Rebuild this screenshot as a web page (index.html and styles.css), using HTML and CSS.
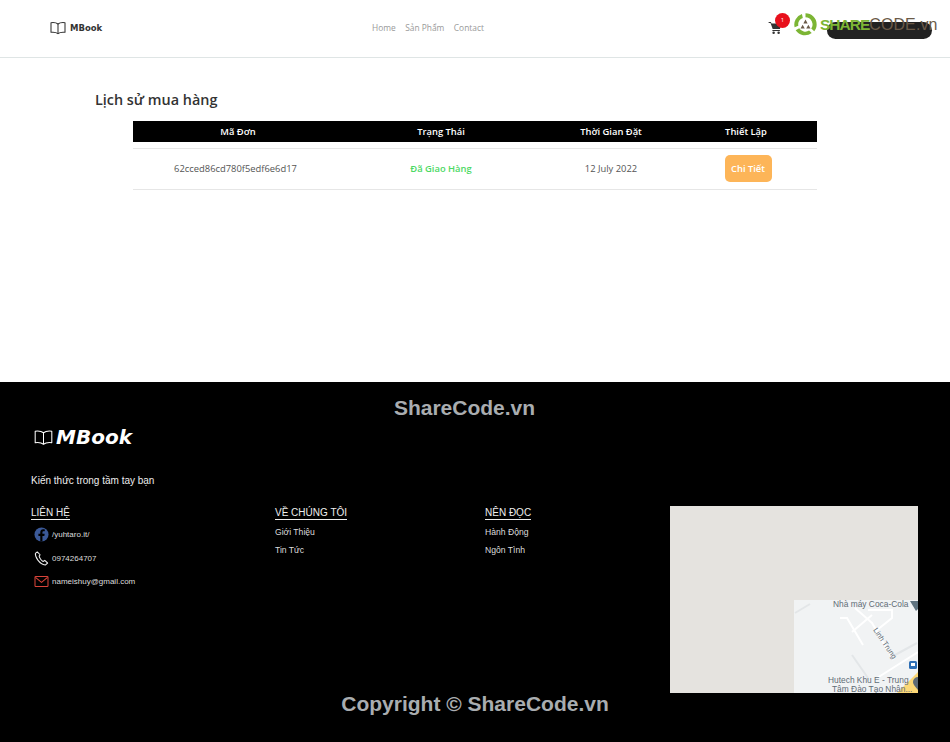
FILE: index.html
```html
<!DOCTYPE html>
<html lang="vi">
<head>
    <meta charset="UTF-8">
    <meta name="viewport" content="width=device-width, initial-scale=1.0">
    <title>MBook</title>
    <link rel="stylesheet" href="styles.css">
</head>
<body>
    <header class="site-header">
        <a class="logo" href="#">
            <svg class="logo-book" viewBox="0 0 24 20" fill="none" stroke="currentColor" stroke-width="1.6" stroke-linejoin="round">
                <path d="M12 4C9.5 2 5.5 1.5 1.5 2v14.500c4-.5 8 0 10.500 2 2.500-2 6.500-2.500 10.500-2V2C18.500 1.500 14.500 2 12 4z"/>
                <path d="M12 4v14.500"/>
            </svg>
            <span>MBook</span>
        </a>
        <nav class="main-nav">
            <a href="#">Home</a>
            <a href="#">Sản Phẩm</a>
            <a href="#">Contact</a>
        </nav>
        <div class="header-right">
            <a class="cart" href="#">
                <svg viewBox="0 0 24 24" width="15" height="15" fill="#333">
                    <path d="M1 3h3.600l1 2.500H22l-3 9H7.500L4 4.800H1z"/>
                    <path d="M7 16h12v1.600H7z"/>
                    <circle cx="9" cy="20.500" r="2"/>
                    <circle cx="17" cy="20.500" r="2"/>
                </svg>
                <span class="cart-badge">1</span>
            </a>
            <div class="user-pill"></div>
        </div>
        <div class="brand-mark">
            <svg viewBox="0 0 28 28" width="25" height="25">
                <path d="M14 1.500A12.500 12.500 0 0 1 26.500 14c0 3-1 5.500-2.700 7.600l-3.400-3A8 8 0 0 0 14 6z" fill="#7cb534"/>
                <path d="M21 23.500A12.500 12.500 0 0 1 3 20.500l4-2.400a8 8 0 0 0 11 2.700z" fill="#7cb534"/>
                <path d="M1.800 17A12.500 12.500 0 0 1 10 2.200l1 4.400A8 8 0 0 0 6 15.500z" fill="#7cb534"/>
                <path d="M14 8.500l2.400 4.300h-4.800zM10.800 14.200l2.400 4.200H8.400zM17.200 14.200l2.400 4.200h-4.800z" fill="#6b5a48"/>
            </svg>
            <div class="brand-name">
                <span class="brand-share">SHARE</span><span class="brand-code">CODE.vn</span>
            </div>
        </div>
    </header>

    <main class="orders">
        <h1>Lịch sử mua hàng</h1>
        <div class="order-table">
            <div class="order-row order-head">
                <div>Mã Đơn</div>
                <div>Trạng Thái</div>
                <div>Thời Gian Đặt</div>
                <div>Thiết Lập</div>
            </div>
            <div class="order-row order-item">
                <div class="order-id">62cced86cd780f5edf6e6d17</div>
                <div class="status-done">Đã Giao Hàng</div>
                <div>12 July 2022</div>
                <div><a class="detail-btn" href="#">Chi Tiết</a></div>
            </div>
        </div>
    </main>

    <footer class="site-footer">
        <div class="footer-mark">ShareCode.vn</div>
        <div class="footer-logo">
            <svg class="footer-book" viewBox="0 0 24 20" fill="none" stroke="currentColor" stroke-width="1.300" stroke-linejoin="round">
                <path d="M12 4C9.5 2 5.5 1.500 1.500 2v14.500c4-.5 8 0 10.500 2 2.500-2 6.500-2.500 10.500-2V2C18.500 1.500 14.500 2 12 4z"/>
                <path d="M12 4v14.500"/>
            </svg>
            <span>MBook</span>
        </div>
        <p class="tagline">Kiến thức trong tầm tay bạn</p>
        <div class="footer-cols">
            <div class="footer-col">
                <h3>LIÊN HỆ</h3>
                <ul class="contact-list">
                    <li>
                        <svg viewBox="0 0 16 16" width="15" height="15">
                            <circle cx="8" cy="8" r="7.500" fill="#3b5998"/>
                            <path d="M9 15.500V9.500h2l.4-2.300H9V5.800c0-.7.3-1.200 1.300-1.200h1.200v-2c-.4 0-1-.1-1.700-.1-1.900 0-3.100 1.100-3.100 3.100v1.600H4.700v2.300h2V15.500z" fill="#000"/>
                        </svg>
                        <span>/yuhtaro.it/</span>
                    </li>
                    <li>
                        <svg viewBox="0 0 16 16" width="15" height="15" fill="none" stroke="#eee" stroke-width="1.100" stroke-linejoin="round">
                            <path d="M3.500 1L1.500 2.500C1 6 5.500 14 12 15l2.500-2.200-3-2.800-1.800 1.200C8 10.500 5.800 7.500 5.500 5.500L6.500 4z"/>
                        </svg>
                        <span>0974264707</span>
                    </li>
                    <li>
                        <svg viewBox="0 0 16 14" width="15" height="13" fill="none" stroke="#d9443a" stroke-width="1.100">
                            <rect x="1" y="1.500" width="14" height="11" rx="1"/>
                            <path d="M1.500 2.500L8 8l6.500-5.500"/>
                        </svg>
                        <span>nameishuy@gmail.com</span>
                    </li>
                </ul>
            </div>
            <div class="footer-col">
                <h3>VỀ CHÚNG TÔI</h3>
                <ul class="link-list">
                    <li>Giới Thiệu</li>
                    <li>Tin Tức</li>
                </ul>
            </div>
            <div class="footer-col">
                <h3>NÊN ĐỌC</h3>
                <ul class="link-list">
                    <li>Hành Động</li>
                    <li>Ngôn Tình</li>
                </ul>
            </div>
            <div class="map">
                <svg class="map-tile" viewBox="0 0 124 93" width="124" height="93">
                    <rect width="124" height="93" fill="#f1f3f4"/>
                    <g fill="none" stroke="#fff" stroke-width="2">
                        <path d="M61 8l17 15 21 37"/>
                        <path d="M83 78l41-26"/>
                        <path d="M46 18h7l16 27"/>
                        <path d="M58 32l20-17"/>
                        <path d="M74 10h24v8L83 30"/>
                    </g>
                    <g fill="none" stroke="#e3e6e8" stroke-width="2">
                        <path d="M1 13l15-9"/>
                        <path d="M58 55l16 23"/>
                        <path d="M101 55l22-12"/>
                    </g>
                    <path d="M103 93l21-21v21z" fill="#fcd877"/>
                    <rect x="115" y="61" width="8" height="8" rx="1.500" fill="#2f6fb5"/>
                    <rect x="117" y="63" width="4" height="3" fill="#fff"/>
                    <path d="M116 1h8v8l-2 2z" fill="#5f7380"/>
                    <path d="M124 77a5 5 0 0 0-5 5c0 3 3 5 5 8z" fill="#5f6b75"/>
                    <text class="map-label" x="39" y="7">Nhà máy Coca-Cola</text>
                    <text class="map-label map-road" transform="translate(79 30) rotate(56)">Linh Trung</text>
                    <text class="map-label" x="34" y="82.500">Hutech Khu E - Trung</text>
                    <text class="map-label" x="38" y="92">Tâm Đào Tạo Nhân...</text>
                </svg>
            </div>
        </div>
        <div class="copyright">Copyright © ShareCode.vn</div>
    </footer>
</body>
</html>
```

FILE: styles.css
```css
body {
    margin: 0;
    font-family: 'Open Sans', sans-serif;
    background: white;
    color: #333;
}

a {
    color: inherit;
    text-decoration: none;
}

ul {
    list-style: none;
    margin: 0;
    padding: 0;
}

/* header */
.site-header {
    position: relative;
    display: grid;
    grid-template-columns: 322px auto 1fr;
    align-items: center;
    height: 55px;
    padding: 0 18px 2px 50px;
    border-bottom: 1px solid #dfe5e5;
}

.logo {
    display: flex;
    align-items: center;
    gap: 4px;
    font-family: 'DejaVu Sans', sans-serif;
    font-size: 8.5px;
    font-weight: bold;
    color: #333;
}

.logo-book {
    width: 16px;
    height: 14px;
}

.main-nav {
    display: flex;
    gap: 9.5px;
    font-size: 8.4px;
    color: #999;
}

.header-right {
    display: flex;
    align-items: center;
    justify-content: flex-end;
    gap: 44px;
}

.cart {
    position: relative;
    display: flex;
}

.cart-badge {
    position: absolute;
    top: -7px;
    left: 7px;
    width: 15px;
    height: 15px;
    border-radius: 50%;
    background: #e8101c;
    color: white;
    font-size: 6px;
    line-height: 15px;
    text-align: center;
}

.user-pill {
    width: 105px;
    height: 17px;
    margin-top: 6px;
    border-radius: 9px;
    background: #222;
}

.brand-mark {
    position: absolute;
    top: 12px;
    left: 793px;
    display: flex;
    align-items: center;
    gap: 2px;
    font-family: 'Liberation Sans', sans-serif;
}

.brand-share {
    font-size: 15.5px;
    font-weight: bold;
    letter-spacing: -1px;
    color: #7cb534;
}

.brand-code {
    font-size: 16px;
    letter-spacing: 0.1px;
    color: #6b5a48;
}

/* lich su */
.orders {
    height: 324px;
    overflow: hidden;
}

.orders h1 {
    margin: 32px 0 11px 95px;
    font-size: 14.4px;
    line-height: 20px;
    font-weight: 600;
    color: #333;
}

.order-table {
    width: 684px;
    margin-left: 133px;
}

.order-row {
    display: grid;
    grid-template-columns: 210px 196px 144px 126px;
    padding-right: 8px;
    align-items: center;
    text-align: center;
    font-size: 9.4px;
}

.order-head {
    height: 21px;
    background: black;
    color: white;
    font-weight: 600;
}

.order-item {
    height: 39px;
    margin-top: 6px;
    padding-bottom: 1px;
    border-top: 1px solid #e6e6e6;
    border-bottom: 1px solid #e6e6e6;
    color: #555;
}

.order-id {
    padding-right: 5px;
}

.status-done {
    color: #4cd964;
    font-weight: 600;
}

.detail-btn {
    display: inline-block;
    width: 47px;
    height: 27px;
    margin-left: 4px;
    border-radius: 5px;
    background: #fdb558;
    color: white;
    font-weight: 600;
    line-height: 27px;
}

/* footer */
.site-footer {
    position: relative;
    height: 360px;
    padding-left: 31px;
    background: black;
    color: white;
    font-family: 'Liberation Sans', sans-serif;
    box-sizing: border-box;
}

.footer-mark {
    position: absolute;
    top: 14px;
    left: 0;
    right: 21px;
    text-align: center;
    font-size: 21px;
    font-weight: bold;
    color: #a9adb0;
}

.footer-logo {
    display: flex;
    align-items: center;
    gap: 3px;
    padding: 41px 0 0 3px;
    font-family: 'DejaVu Sans', sans-serif;
    font-size: 20px;
    line-height: 28px;
    font-style: oblique;
    font-weight: bold;
}

.footer-book {
    width: 19px;
    height: 17px;
}

.tagline {
    margin: 23px 0 0;
    font-size: 10px;
    line-height: 13px;
    color: #eee;
}

.footer-cols {
    display: grid;
    grid-template-columns: 244px 210px 185px 248px;
    margin-top: 15px;
}

.footer-col h3 {
    display: inline-block;
    margin: 1px 0 0;
    font-size: 10px;
    line-height: 13px;
    font-weight: normal;
    color: #eee;
    border-bottom: 1px solid #eee;
}

.contact-list {
    margin-top: 3px;
    font-size: 8px;
    color: #ddd;
}

.contact-list li {
    display: flex;
    align-items: center;
    gap: 3px;
    height: 23.5px;
    padding-left: 3px;
}

.contact-list svg {
    width: 15px;
    flex-shrink: 0;
}

.link-list {
    margin-top: 3px;
    font-size: 8.6px;
    color: #ddd;
}

.link-list li {
    height: 18px;
    line-height: 18px;
}

.map {
    display: flex;
    align-items: flex-end;
    justify-content: flex-end;
    height: 187px;
    margin-top: 4px;
    background: #e5e3df;
}

.map-tile {
    display: block;
}

.map-label {
    font-size: 8.4px;
    fill: #5f6b75;
}

.map-road {
    font-size: 7.5px;
}

.copyright {
    position: absolute;
    top: 310px;
    left: 0;
    right: 0;
    text-align: center;
    font-size: 21px;
    font-weight: bold;
    color: #a9adb0;
}
```
